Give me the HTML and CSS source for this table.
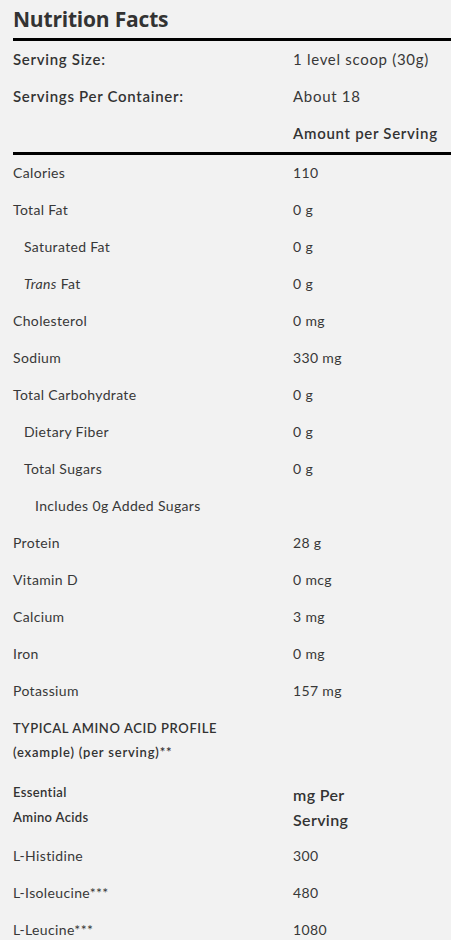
FILE: index.html
```html
<!DOCTYPE html>
<html lang="en">
<head>
  <meta charset="UTF-8" />
  <title>Nutrition Facts</title>
  <link rel="stylesheet" href="styles.css">
</head>
<body>
  <div class="facts">
    <h2 class="title">Nutrition Facts</h2>

    <div class="head">
      <div class="row"><span class="label">Serving Size:</span><span>1 level scoop (30g)</span></div>
      <div class="row"><span class="label">Servings Per Container:</span><span>About 18</span></div>
      <div class="row"><span></span><span class="label">Amount per Serving</span></div>
    </div>

    <div class="list">
      <div class="row"><span>Calories</span><span>110</span></div>
      <div class="row"><span>Total Fat</span><span>0 g</span></div>
      <div class="row"><span class="sub">Saturated Fat</span><span>0 g</span></div>
      <div class="row"><span class="sub"><em>Trans</em> Fat</span><span>0 g</span></div>
      <div class="row"><span>Cholesterol</span><span>0 mg</span></div>
      <div class="row"><span>Sodium</span><span>330 mg</span></div>
      <div class="row"><span>Total Carbohydrate</span><span>0 g</span></div>
      <div class="row"><span class="sub">Dietary Fiber</span><span>0 g</span></div>
      <div class="row"><span class="sub">Total Sugars</span><span>0 g</span></div>
      <div class="row"><span class="sub2">Includes 0g Added Sugars</span><span></span></div>
      <div class="row"><span>Protein</span><span>28 g</span></div>
      <div class="row"><span>Vitamin D</span><span>0 mcg</span></div>
      <div class="row"><span>Calcium</span><span>3 mg</span></div>
      <div class="row"><span>Iron</span><span>0 mg</span></div>
      <div class="row"><span>Potassium</span><span>157 mg</span></div>
    </div>

    <div class="amino">
      <p class="amino-title">TYPICAL AMINO ACID PROFILE<br><span class="lower">(example) (per serving)**</span></p>
      <div class="amino-head">
        <span class="essential">Essential<br>Amino Acids</span>
        <span class="per">mg Per<br>Serving</span>
      </div>
      <div class="row"><span>L-Histidine</span><span>300</span></div>
      <div class="row"><span>L-Isoleucine***</span><span>480</span></div>
      <div class="row"><span>L-Leucine***</span><span>1080</span></div>
    </div>
  </div>
</body>
</html>
```

FILE: styles.css
```css
body {
  margin: 0;
  background: #f2f2f2;
  color: #383838;
  font-family: Lato, "Liberation Sans", sans-serif;
  font-size: 14px;
  letter-spacing: 0.35px;
  overflow: hidden;
}
.facts {
  padding: 4px 0 0 13px;
}
.title {
  font-family: "Open Sans", sans-serif;
  font-size: 21px;
  font-weight: 700;
  letter-spacing: -0.2px;
  color: #333;
  margin: 0 0 3px;
  line-height: 31px;
}
.head {
  border-top: 3px solid #000;
  border-bottom: 3px solid #000;
}
.row {
  display: grid;
  grid-template-columns: 280px 1fr;
  align-items: center;
  height: 35px;
  padding-bottom: 2px;
}
.amino .row {
  height: 36px;
  padding-bottom: 1px;
}
.head .row {
  font-size: 15px;
  letter-spacing: 0.7px;
}
.label {
  font-weight: 600;
  color: #333;
}
.sub {
  padding-left: 11px;
}
.sub2 {
  padding-left: 22px;
  white-space: nowrap;
}
em {
  font-style: italic;
}
.amino-title {
  margin: 0;
  padding-top: 6px;
  font-size: 13px;
  font-weight: 600;
  line-height: 24px;
  letter-spacing: 0.6px;
  color: #333;
}
.amino-title .lower {
  letter-spacing: 0.8px;
}
.amino-head {
  display: grid;
  grid-template-columns: 280px 1fr;
  height: 73px;
  color: #333;
}
.essential {
  font-size: 13px;
  font-weight: 600;
  line-height: 25px;
  padding-top: 16px;
}
.per {
  font-size: 16px;
  font-weight: 600;
  line-height: 25px;
  padding-top: 18px;
}
```
